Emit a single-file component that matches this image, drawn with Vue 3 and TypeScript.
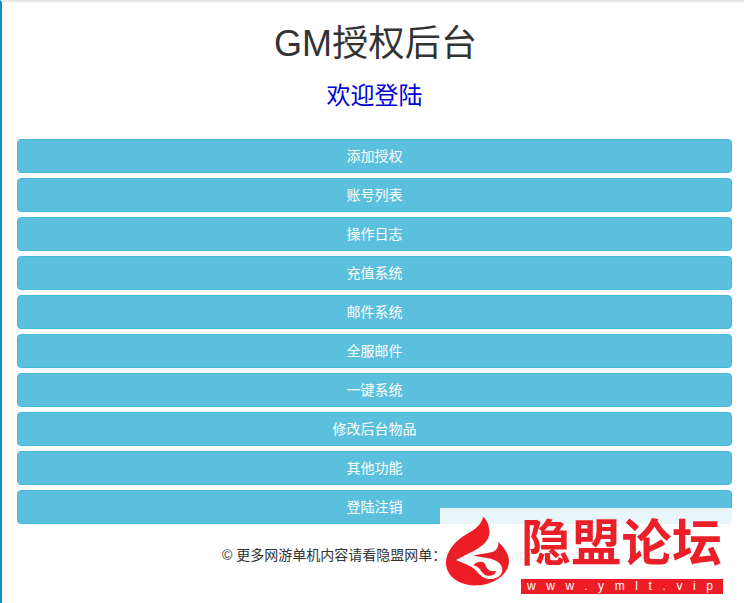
<script setup lang="ts">
const items: string[] = ['添加授权', '账号列表', '操作日志', '充值系统', '邮件系统', '全服邮件', '一键系统', '修改后台物品', '其他功能', '登陆注销']
</script>

<template>
  <div class="page">
    <h1 class="title">GM授权后台</h1>
    <h3 class="welcome">欢迎登陆</h3>
    <div class="menu">
      <a v-for="item in items" :key="item" class="btn">{{ item }}</a>
    </div>
    <footer class="foot">© 更多网游单机内容请看隐盟网单：<span class="link">www.ymlt.vip</span></footer>
    <div class="mark">
      <svg class="flame" width="81" height="90" viewBox="0 0 243 270">
        <path fill="#ee1c25" d="M130 20C118 60 82 66 55 90C25 116 10 150 22 180C36 214 76 228 112 226C160 224 205 195 207 155C208 130 190 112 175 95L148 60C146 40 140 30 130 20Z" />
        <path fill="#fff" d="M48 150C78 132 122 118 140 92C150 78 150 62 146 48L175 60L175 95C177 115 165 126 148 128C130 131 114 132 100 137C124 142 150 142 168 152C182 160 190 172 186 186C182 202 160 210 140 206C118 200 112 182 96 172C82 163 64 158 48 150Z" />
        <path fill="#ee1c25" d="M100 166C106 158 120 152 130 157C138 162 137 174 146 180C152 184 160 184 168 183C166 194 154 199 142 197C128 194 124 182 116 174C112 170 106 168 100 166Z" />
      </svg>
      <div class="brand">
        <div class="brand-name">隐盟论坛</div>
        <div class="brand-url">www.ymlt.vip</div>
      </div>
    </div>
  </div>
</template>

<style scoped>
.page {
  position: relative;
  box-sizing: border-box;
  height: 603px;
  padding: 0 12px 0 15px;
  border-top: 2px solid #e7e7e7;
  border-left: 2px solid #1b8bc4;
  background: #fff;
  font-family: "Liberation Sans", "Noto Sans CJK SC", sans-serif;
  color: #333;
  overflow: hidden;
}
.title {
  margin: 22px 0 0;
  padding-left: 2px;
  font-size: 36px;
  line-height: 40px;
  font-weight: 400;
  letter-spacing: 0.2px;
  text-align: center;
}
.welcome {
  margin: 18px 0 0;
  font-size: 24px;
  line-height: 27px;
  font-weight: 400;
  text-align: center;
  color: #0000d8;
}
.menu {
  display: flex;
  flex-direction: column;
  gap: 5px;
  margin-top: 30px;
}
.btn {
  box-sizing: border-box;
  height: 34px;
  border: 1px solid #46b8da;
  border-radius: 4px;
  background: #5bc0de;
  color: #fff;
  font-size: 14px;
  line-height: 32px;
  text-align: center;
}
.foot {
  margin-top: 21px;
  font-size: 14px;
  line-height: 20px;
  padding-left: 205px;
  white-space: nowrap;
}
.link {
  position: relative;
  z-index: 1;
  color: rgba(90, 90, 90, 0.12);
}
.mark {
  position: absolute;
  left: 438px;
  top: 506px;
  width: 292px;
  height: 93px;
  display: flex;
  background: linear-gradient(to bottom, rgba(255, 255, 255, 0.86) 0 16px, rgba(255, 255, 255, 0) 16px);
}
.flame {
  margin-top: 2px;
  flex: none;
}
.brand {
  display: flex;
  flex-direction: column;
  align-items: stretch;
  margin-top: 6px;
  width: 202px;
}
.brand-name {
  font-family: "Noto Sans CJK SC", sans-serif;
  font-weight: 700;
  font-size: 50px;
  line-height: 50px;
  letter-spacing: 0.3px;
  color: #ea1f28;
  white-space: nowrap;
}
.brand-url {
  margin-top: 15px;
  height: 15px;
  background: #ee1c25;
  color: #fff;
  font-size: 12px;
  line-height: 15px;
  letter-spacing: 10.6px;
  padding-left: 6px;
  white-space: nowrap;
}
</style>
